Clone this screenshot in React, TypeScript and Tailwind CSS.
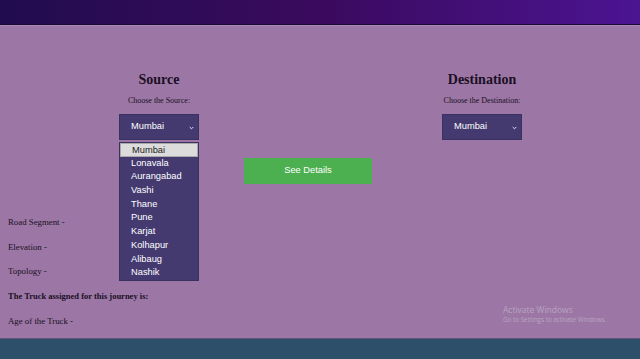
import React from "react";

const cities = ["Mumbai","Lonavala","Aurangabad","Vashi","Thane","Pune","Karjat","Kolhapur","Alibaug","Nashik"];

function Chevron() {
  return (
    <svg width="5" height="4" viewBox="0 0 5 4" className="absolute right-[4px] top-[11px]">
      <path d="M0.7 1 L2.5 2.8 L4.3 1" fill="none" stroke="#e6e2f0" strokeWidth="1" />
    </svg>
  );
}

function Select({ open }: { open?: boolean }) {
  return (
    <div className="relative w-[80px] h-[26px] bg-[#443a70] border border-[#3a3163] text-white text-[9.3px] flex items-center pl-[11px]" style={{ fontFamily: '"Liberation Sans", Arial, sans-serif' }}>
      Mumbai
      <Chevron />
      {open && (
        <div className="absolute left-[-1px] top-[27px] w-[80px] bg-[#443a70] border border-[#3a3163] py-0">
          {cities.map((c, i) => (
            <div
              key={c}
              className={
                "h-[13.7px] leading-[13.7px] pl-[11px] text-[9.3px] " +
                (i === 0 ? "bg-[#dcdcdc] text-[#1d1d1d] border border-[#a9a9a9] pl-[10px] leading-[11.7px]" : "text-white")
              }
            >
              {c}
            </div>
          ))}
        </div>
      )}
    </div>
  );
}

export default function App() {
  const serif = { fontFamily: '"Liberation Serif", "Times New Roman", serif' };
  return (
    <div className="w-[640px] h-[359px] overflow-hidden flex flex-col bg-[#9c77a5]" style={serif}>
      <div className="h-[25px] shrink-0 bg-gradient-to-r from-[#210c4e] via-[#3a0a5e] to-[#4b1492] border-b border-[#1a0836]" />
      <div className="h-[1px] bg-[#a88ab5] shrink-0" />
      <div className="flex-1 relative text-[#1a0f24]">
        <div className="flex pl-[79px]">
          <div className="w-[160px] flex flex-col items-center pt-[46px]">
            <div className="text-[14px] leading-[16px] font-bold">Source</div>
            <div className="text-[8px] leading-[10px] mt-[8px]">Choose the Source:</div>
            <div className="mt-[8px]">
              <Select open />
            </div>
          </div>
          <div className="ml-[5px] mt-[130px]">
            <button className="w-[128px] h-[26px] bg-[#4caf50] text-white text-[9.3px]" style={{ fontFamily: '"Liberation Sans", Arial, sans-serif' }}>
              See Details
            </button>
          </div>
          <div className="ml-[30px] w-[160px] flex flex-col items-center pt-[46px]">
            <div className="text-[14px] leading-[16px] font-bold">Destination</div>
            <div className="text-[8px] leading-[10px] mt-[8px]">Choose the Destination:</div>
            <div className="mt-[8px]">
              <Select />
            </div>
          </div>
        </div>
        <div className="pl-[8px] mt-[26px] text-[8.8px]">
          <div className="h-[24.8px] flex items-center">Road Segment -</div>
          <div className="h-[24.8px] flex items-center">Elevation -</div>
          <div className="h-[24.8px] flex items-center">Topology -</div>
          <div className="h-[24.8px] flex items-center font-bold text-[8.5px]">The Truck assigned for this journey is:</div>
          <div className="h-[24.8px] flex items-center">Age of the Truck -</div>
        </div>
        <div className="absolute left-[503px] top-[280px] text-[#b8a4c0] leading-none" style={{ fontFamily: '"Open Sans", "Noto Sans", sans-serif' }}>
          <div className="text-[8.5px]">Activate Windows</div>
          <div className="text-[6.3px] mt-[2px]">Go to Settings to activate Windows.</div>
        </div>
      </div>
      <div className="h-[1px] bg-[#5e5580] shrink-0" />
      <div className="h-[20px] bg-[#2e4f69] shrink-0" />
    </div>
  );
}
